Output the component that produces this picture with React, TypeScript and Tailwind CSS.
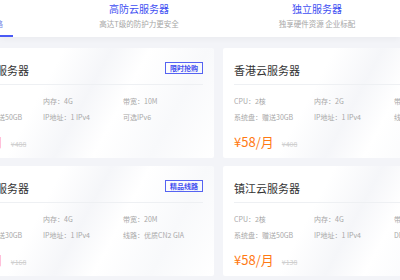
import React from "react";

type Card = {
  title: string;
  badge?: string;
  specs: string[];
  price: string;
  old: string;
};

const cards: Card[] = [
  {
    title: "美国云服务器",
    badge: "限时抢购",
    specs: ["CPU：2核", "内存：4G", "带宽：10M", "系统盘：赠送50GB", "IP地址：1 IPv4", "可选IPv6"],
    price: "¥68/月",
    old: "¥488",
  },
  {
    title: "香港云服务器",
    badge: "限时抢购",
    specs: ["CPU：2核", "内存：2G", "带宽：5M", "系统盘：赠送30GB", "IP地址：1 IPv4", "线路：BGP多线"],
    price: "¥58/月",
    old: "¥408",
  },
  {
    title: "日本云服务器",
    badge: "精品线路",
    specs: ["CPU：2核", "内存：4G", "带宽：20M", "系统盘：赠送30GB", "IP地址：1 IPv4", "线路：优质CN2 GIA"],
    price: "¥78/月",
    old: "¥168",
  },
  {
    title: "镇江云服务器",
    badge: "高防推荐",
    specs: ["CPU：2核", "内存：4G", "带宽：10M", "系统盘：赠送50GB", "IP地址：1 IPv4", "DDoS防护：20G"],
    price: "¥58/月",
    old: "¥138",
  },
];

function ServerCard({ c }: { c: Card }) {
  return (
    <div className="h-[110px] rounded-[2px] px-[11px] pt-[15px] bg-[linear-gradient(118deg,#ffffff_0%,#ffffff_35%,#f5f6f9_50%,#ffffff_62%,#f8f9fb_80%,#ffffff_100%)]">
      <div className="flex items-center justify-between border-b border-[#eef0f3] pb-[7px]">
        <span className="text-[11px] leading-[14px] text-[#333]">{c.title}</span>
        {c.badge && (
          <span className="mt-[-4px] h-[12px] px-[4px] border border-[#5563f2] text-[#3f4ef0] text-[7px] leading-[10px] font-bold">
            {c.badge}
          </span>
        )}
      </div>
      <div className="mt-[11px] grid grid-cols-[80px_80px_80px] gap-y-[6px] text-[7px] leading-[10px] text-[#a8a8a8]">
        {c.specs.map((s) => (
          <span key={s} className="whitespace-nowrap">
            {s}
          </span>
        ))}
      </div>
      <div className="mt-[12px] flex items-baseline">
        <span className="text-[13px] leading-[16px] text-[#ff7a14]">{c.price}</span>
        <span className="ml-[8px] text-[7px] text-[#cfcfcf] line-through">{c.old}</span>
      </div>
    </div>
  );
}

function Tab({ title, sub, active, cls }: { title: string; sub: string; active?: boolean; cls: string }) {
  return (
    <div className={`${cls} w-[178px] shrink-0 h-[37px] flex flex-col items-center pt-[2px]`}>
      <span className="text-[10px] leading-[14px] text-[#3f50f2] whitespace-nowrap">{title}</span>
      <span className={`mt-[2px] text-[7.5px] leading-[12px] whitespace-nowrap ${active ? "text-[#7884e6]" : "text-[#a6a6a6]"}`}>
        {sub}
      </span>
      {active && <div className="mt-auto h-[2px] w-[104px] bg-[#4a5af5]" />}
    </div>
  );
}

export default function App() {
  return (
    <div className="w-[400px] h-[280px] overflow-hidden bg-[#f3f4f8] font-['Noto_Sans_CJK_SC','Noto_Sans',sans-serif]">
      <div className="h-[37px] bg-white shadow-[0_2px_6px_rgba(0,0,0,0.04)] flex">
        <Tab cls="ml-[-128px]" title="香港云服务器" sub="性价比高 稳定低延迟线路" active />
        <Tab cls="" title="高防云服务器" sub="高达T级的防护力更安全" />
        <Tab cls="" title="独立服务器" sub="独享硬件资源 企业标配" />
      </div>
      <div className="ml-[-48px] mt-[11px] grid grid-cols-[262px_262px] gap-x-[9px] gap-y-[8px]">
        {cards.map((c) => (
          <ServerCard key={c.title} c={c} />
        ))}
      </div>
    </div>
  );
}
